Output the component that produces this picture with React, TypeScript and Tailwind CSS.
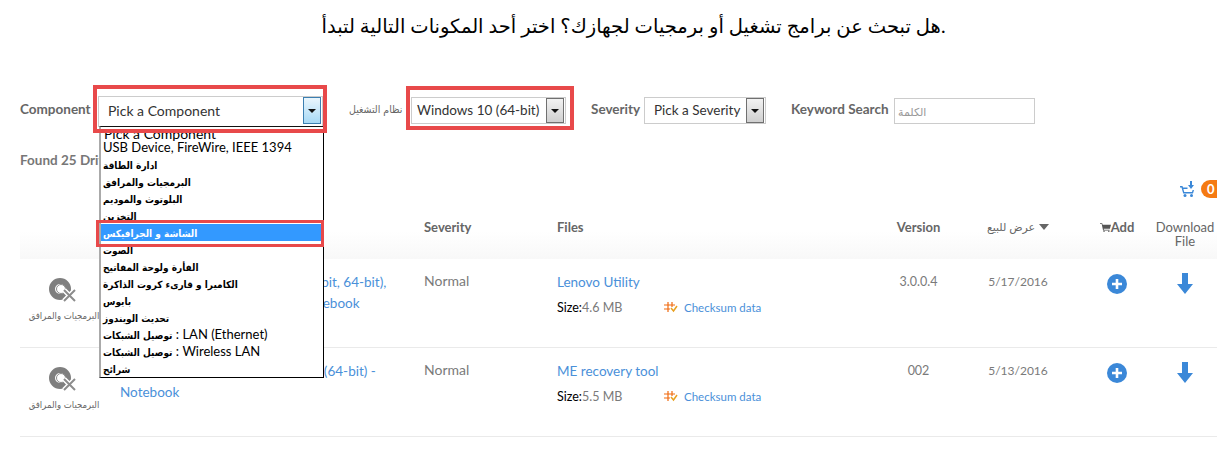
import React from 'react';

const menuItems: { ar?: string; en?: string }[] = [
  { en: 'USB Device, FireWire, IEEE 1394' },
  { ar: 'ادارة الطاقة' },
  { ar: 'البرمجيات والمرافق' },
  { ar: 'البلوتوث والموديم' },
  { ar: 'التخزين' },
  { ar: 'الشاشة و الجرافيكس' },
  { ar: 'الصوت' },
  { ar: 'الفأرة ولوحة المفاتيح' },
  { ar: 'الكاميرا و قارىء كروت الذاكرة' },
  { ar: 'بايوس' },
  { ar: 'تحديث الويندوز' },
  { ar: 'توصيل الشبكات', en: ' : LAN (Ethernet)' },
  { ar: 'توصيل الشبكات', en: ' : Wireless LAN' },
  { ar: 'شرائح' },
];

const rows = [
  { line1: 'Lenovo Utility for Windows 8 (32-bit, 64-bit),', line2: 'Windows 8.1 (32-bit, 64-bit) - Notebook', severity: 'Normal', file: 'Lenovo Utility', size: '4.6 MB', version: '3.0.0.4', date: '5/17/2016' },
  { line1: 'ME recovery tool for Windows 10 (64-bit) -', line2: 'Notebook', severity: 'Normal', file: 'ME recovery tool', size: '5.5 MB', version: '002', date: '5/13/2016' },
];

function Arrow({ hot }: { hot?: boolean }) {
  return (
    <div className={`flex w-[18px] items-center justify-center self-stretch border ${hot ? 'border-[#3c7fb1] bg-gradient-to-b from-[#eaf6fd] to-[#a7d9f5]' : 'border-[#707070] bg-gradient-to-b from-[#f2f2f2] to-[#cfcfcf]'}`}>
      <svg width="8" height="4" viewBox="0 0 8 4"><path d="M0 0h8L4 4z" fill="#111" /></svg>
    </div>
  );
}

function DiscIcon() {
  return (
    <svg width="30" height="26" viewBox="0 0 30 26">
      <circle cx="11" cy="11" r="8" fill="none" stroke="#7f7f7f" strokeWidth="6" />
      <circle cx="12" cy="11" r="4.5" fill="#fff" stroke="#8c8c8c" strokeWidth="1" />
      <path d="M15 12l11 11M26 12L15 23" stroke="#fff" strokeWidth="5" />
      <path d="M15 12l11 11M26 12L15 23" stroke="#8c8c8c" strokeWidth="2" />
    </svg>
  );
}

function ChecksumIcon() {
  return (
    <svg width="14" height="12" viewBox="0 0 14 12" fill="none" stroke="#f06a0f" strokeWidth="1.2">
      <path d="M4 0v10M8 0v5M0 3h11M0 7h6" />
      <path d="M7 6l2.5 3L13 4" stroke="#e8a020" strokeWidth="1.5" />
    </svg>
  );
}

function CartIcon({ color, w, h }: { color: string; w: number; h: number }) {
  return (
    <svg width={w} height={h} viewBox="0 0 15 15" fill={color}>
      <path d="M0 3h3l.6 2H15l-1.5 5.5H5l.3 1.5H13v1H4.2L2.3 4H0z" />
      <circle cx="5.5" cy="14" r="1" />
      <circle cx="12" cy="14" r="1" />
    </svg>
  );
}

function CartDownIcon() {
  return (
    <svg width="16" height="16" viewBox="0 0 16 16" fill="#3b88d8">
      <path d="M0 5h2.5l.5 1.500h4.500v1.500H3.400l.8 3H12l.6-2H14l-1 3.500H3.200L1.500 6.500H0z" />
      <path d="M10 0h2v4h2l-3 4-3-4h2z" />
      <circle cx="5" cy="14.500" r="1.500" />
      <circle cx="11.500" cy="14.500" r="1.500" />
    </svg>
  );
}

export default function App() {
  return (
    <div className="relative h-[454px] w-[1217px] overflow-hidden bg-white text-[#6e6e6e]" style={{ fontFamily: 'Lato, "DejaVu Sans", sans-serif' }}>
      <h1 dir="ltr" className="pt-[12px] pl-[50px] text-center text-[19.500px] leading-[28px] font-normal text-black">
        هل تبحث عن برامج تشغيل أو برمجيات لجهازك؟ اختر أحد المكونات التالية لتبدأ.
      </h1>

      {/* Filters */}
      <div className="mt-[56px] flex h-[28px] items-start pl-[20px] text-[13.5px] leading-[27px] font-bold text-[#666]">
        <span className="w-[78px]">Component</span>
        <div className="relative h-[31px] w-[225px]">
          <div className="flex h-full items-center border border-[#ccc] pr-px pb-[2px] pl-[9px] text-[14px] font-normal text-[#333]">
            <span className="flex-1">Pick a Component</span>
            <Arrow hot />
          </div>
          <div className="absolute top-[30px] left-px z-10 h-[252px] w-[225px] overflow-hidden border-t border-r border-b border-l-2 border-t-[#111] border-r-black border-b-black border-l-[#aaa] bg-white text-[13px] leading-[17px] font-normal text-black">
            <div className="h-[12px] -translate-y-[2px] pl-[3px] text-[14px]">Pick a Component</div>
            {menuItems.map((item, i) => (
              <div
                key={i}
                className={`h-[17px] pl-[2px] whitespace-nowrap ${item.ar?.startsWith('الشاشة') ? 'bg-[#3399ff] text-white' : ''}`}
              >
                {item.ar && <bdi className="font-['DejaVu_Sans_Condensed'] text-[10px] font-bold">{item.ar}</bdi>}
                {item.en && <span className="whitespace-pre">{item.en}</span>}
              </div>
            ))}
          </div>
          {/* annotation boxes */}
          <div className="absolute -top-[11px] -left-[5px] z-20 h-[48px] w-[234px] border-4 border-[#e8494a]" />
          <div className="absolute top-[124px] -left-[2px] z-20 h-[27px] w-[228px] border-[3px] border-[#e8494a]" />
        </div>
        <span className="ml-[26px] w-[62px] font-['DejaVu_Sans_Condensed'] text-[10.500px] font-normal">نظام التشغيل</span>
        <div className="relative mt-px h-[27px] w-[155px]">
          <div className="flex h-full items-center border border-[#ccc] pr-px pl-[5px] font-normal text-[#333]">
            <span className="flex-1">Windows 10 (64-bit)</span>
            <Arrow />
          </div>
          <div className="absolute -top-[11px] -left-[5px] h-[44px] w-[168px] border-4 border-[#e8494a]" />
        </div>
        <span className="ml-[25px] w-[53px]">Severity</span>
        <div className="mt-px flex h-[27px] w-[122px] items-center border border-[#ccc] pr-px pl-[9px] font-normal text-[#333]">
          <span className="flex-1">Pick a Severity</span>
          <Arrow />
        </div>
        <span className="ml-[25px] w-[103px]">Keyword Search</span>
        <div className="mt-[2px] flex h-[26px] w-[141px] items-center border border-[#ccc] pl-[3px] text-[11px] font-normal text-[#999]">الكلمة</div>
      </div>

      <div className="mt-[26px] pl-[20px] text-[13.500px] leading-[20px] font-bold text-[#777]">Found 25 Drivers</div>

      <div className="mt-[9px] flex h-[20px] items-center justify-end gap-[5px]">
        <CartDownIcon />
        <div className="h-[18px] w-[16px] rounded-l-full bg-[#f57a12] pl-[6px] text-[13px] leading-[18px] font-bold text-white">0</div>
      </div>

      {/* Table */}
      <div className="mt-[14px] ml-[20px] w-[1203px]">
        <div className="grid h-[46px] grid-cols-[100px_304px_133px_331px_61px_138px_60px_76px] bg-gradient-to-b from-white from-40% to-[#f8f8f8] pt-[7px] text-center text-[13px] leading-[14px] font-bold text-[#666]">
          <span />
          <span />
          <span className="text-left">Severity</span>
          <span className="text-left">Files</span>
          <span>Version</span>
          <span className="flex items-start justify-center gap-[4px] text-[11px] font-normal">
            <span>عرض للبيع</span>
            <svg className="mt-[4px]" width="10" height="6" viewBox="0 0 10 6"><path d="M0 0h10L5 6z" fill="#666" /></svg>
          </span>
          <span className="flex items-start justify-center">
            <span className="mt-[1px]"><CartIcon color="#555" w={11} h={11} /></span>Add
          </span>
          <span className="font-normal">Download<br />File</span>
        </div>

        {rows.map((r) => (
          <div key={r.file} className="grid h-[89px] w-[1197px] grid-cols-[100px_304px_133px_331px_61px_138px_60px_70px] border-b border-[#eaeaea] pt-[13px] text-center text-[#7a7a7a]">
            <div className="flex w-[88px] flex-col items-center pt-[6px]">
              <DiscIcon />
              <span className="mt-[4px] font-['DejaVu_Sans_Condensed'] text-[9.500px] leading-[16px] text-[#666]">البرمجيات والمرافق</span>
            </div>
            <div className="text-left text-[13.500px] leading-[21px] text-[#4a90d9]">{r.line1}<br />{r.line2}</div>
            <div className="text-left text-[14px] leading-[18px]">{r.severity}</div>
            <div className="text-left">
              <div className="text-[13.500px] leading-[20px] text-[#4a90d9]">{r.file}</div>
              <div className="mt-[7px] flex items-center text-[12.500px] leading-[18px]">
                <span className="w-[107px]"><span className="text-black">Size:</span>{r.size}</span>
                <ChecksumIcon />
                <span className="ml-[6px] text-[11.500px] text-[#4a90d9]">Checksum data</span>
              </div>
            </div>
            <div className="text-[12.500px] leading-[20px]">{r.version}</div>
            <div className="text-[12px] leading-[20px]">{r.date}</div>
            <div className="flex justify-center pt-[2px]">
              <svg width="20" height="20" viewBox="0 0 20 20">
                <circle cx="10" cy="10" r="10" fill="#3b88d8" />
                <path d="M10 5v10M5 10h10" stroke="#fff" strokeWidth="2.6" />
              </svg>
            </div>
            <div className="flex justify-center pt-px pl-[6px]">
              <svg width="16" height="21" viewBox="0 0 16 21"><path d="M5 0h6v11h5l-8 10-8-10h5z" fill="#3b88d8" /></svg>
            </div>
          </div>
        ))}
      </div>
    </div>
  );
}
